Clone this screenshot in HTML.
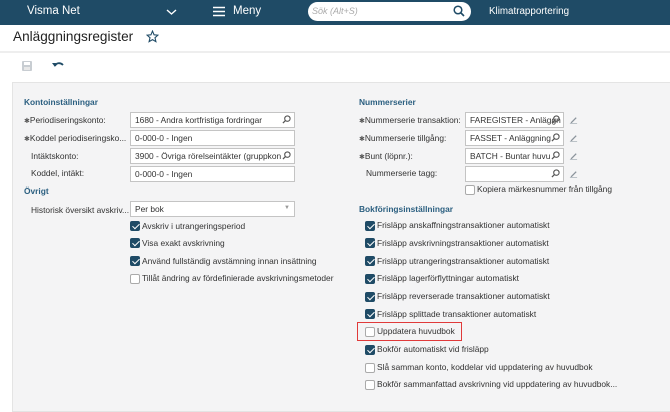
<!DOCTYPE html>
<html><head><meta charset="utf-8"><style>
*{margin:0;padding:0;box-sizing:border-box}
body{width:670px;height:403px;overflow:hidden;background:#fff;font-family:"Liberation Sans",Arial,sans-serif;font-size:8.4px;color:#333;position:relative}
.a{position:absolute;white-space:nowrap}
.hdr{position:absolute;left:0;top:0;width:670px;height:25px;background:#1f4b66}
.panel{position:absolute;left:12px;top:82px;width:660px;height:330px;background:#f4f4f5;border:1px solid #e4e4e4}
.sec{color:#2b5f80;font-weight:bold;font-size:8.4px}
.lbl{font-size:8.4px;color:#333}
.inp{position:absolute;height:16px;background:#fff;border:1px solid #c4c4c4;font-size:8.4px;padding:2px 4px;line-height:11px;white-space:nowrap;overflow:hidden}
.cb{position:absolute;width:10px;height:10px;border:1px solid #aaa;border-radius:2px;background:#fff}
.cb.on{background:#1f4b66;border-color:#1f4b66}
.cb.on::after{content:"";position:absolute;left:2.5px;top:0px;width:3px;height:6px;border:solid #fff;border-width:0 1.5px 1.5px 0;transform:rotate(45deg)}
.star{color:#555;font-size:7px}
</style></head><body>
<svg width="0" height="0" style="position:absolute"><defs>
<symbol id="mg" viewBox="0 0 10 10"><circle cx="6" cy="4" r="3" stroke="#555" stroke-width="1.2" fill="none"/><path d="M4 6L1 9" stroke="#555" stroke-width="1.4"/></symbol>
<symbol id="pn" viewBox="0 0 10 10"><path d="M2 8L7.5 2.5l1 1L3 9H2z" fill="#8a939b"/><path d="M1 9.5h8" stroke="#b5bcc2" stroke-width="1"/></symbol>
</defs></svg>
<div class="hdr"></div>
<div class="a" style="left:27px;top:5px;color:#fff;font-size:11.5px">Visma Net</div>
<svg class="a" style="left:166px;top:8px" width="11" height="8"><path d="M1 2l4.5 4L10 2" stroke="#fff" stroke-width="1.4" fill="none"/></svg>
<svg class="a" style="left:213px;top:6px" width="12" height="11"><path d="M0 1.5h12M0 5.5h12M0 9.5h12" stroke="#fff" stroke-width="1.4"/></svg>
<div class="a" style="left:233px;top:5px;color:#fff;font-size:11.5px">Meny</div>
<div class="a" style="left:308px;top:2px;width:163px;height:19px;background:#fff;border-radius:10px"></div>
<div class="a" style="left:312px;top:6px;color:#aaa;font-size:9px;font-style:italic">Sök (Alt+S)</div>
<svg class="a" style="left:453px;top:5px" width="12" height="12"><circle cx="5" cy="5" r="3.8" stroke="#1f4b66" stroke-width="1.5" fill="none"/><path d="M8 8l3 3" stroke="#1f4b66" stroke-width="1.6"/></svg>
<div class="a" style="left:489px;top:6px;color:#fff;font-size:9.8px">Klimatrapportering</div>

<div class="a" style="left:13px;top:29px;font-size:13.6px;color:#222">Anläggningsregister</div>
<svg class="a" style="left:146px;top:30px" width="13" height="13" viewBox="0 0 24 24"><path d="M12 2l2.9 6.9 7.1.6-5.4 4.7 1.7 7.3L12 17.8 5.7 21.5l1.7-7.3L2 9.5l7.1-.6z" fill="none" stroke="#1f4b66" stroke-width="2"/></svg>
<div class="a" style="left:0;top:51px;width:670px;height:2px;background:#eee"></div>
<svg class="a" style="left:22px;top:61px" width="10" height="10"><rect x="0" y="0" width="10" height="10" rx="1" fill="#c8cdd2"/><rect x="2" y="1" width="6" height="3" fill="#fff"/><rect x="2" y="6" width="6" height="3" fill="#e8e8e8"/></svg>
<svg class="a" style="left:52px;top:60px" width="12" height="9"><path d="M3 6C4 3 8 2 11 5" stroke="#1f4b66" stroke-width="1.8" fill="none"/><path d="M0 3l4 0-1 4z" fill="#1f4b66"/></svg>

<div class="panel"></div>
<div class="a sec" style="left:24px;top:97px">Kontoinställningar</div>
<div class="a lbl" style="left:24px;top:115px"><span class="star">✱</span>Periodiseringskonto:</div>
<div class="a lbl" style="left:24px;top:133px"><span class="star">✱</span>Koddel periodiseringsko...</div>
<div class="a lbl" style="left:31px;top:151px">Intäktskonto:</div>
<div class="a lbl" style="left:31px;top:168px">Koddel, intäkt:</div>
<div class="inp" style="left:130px;top:112px;width:165px">1680 - Andra kortfristiga fordringar</div>
<div class="inp" style="left:130px;top:130px;width:165px">0-000-0 - Ingen</div>
<div class="inp" style="left:130px;top:148px;width:165px;padding-right:16px">3900 - Övriga rörelseintäkter (gruppkon</div>
<div class="inp" style="left:130px;top:166px;width:165px">0-000-0 - Ingen</div>
<svg class="a" style="left:282px;top:115px" width="9" height="9"><use href="#mg"/></svg>
<svg class="a" style="left:282px;top:151px" width="9" height="9"><use href="#mg"/></svg>
<div class="a sec" style="left:24px;top:186px">Övrigt</div>
<div class="a lbl" style="left:31px;top:205px">Historisk översikt avskriv...</div>
<div class="inp" style="left:130px;top:201px;width:165px;height:16px">Per bok</div>
<div class="a" style="left:284px;top:205px;font-size:6px;color:#999">▼</div>

<div class="cb on" style="left:130px;top:221px"></div><div class="a lbl" style="left:142px;top:221px">Avskriv i utrangeringsperiod</div>
<div class="cb on" style="left:130px;top:238px"></div><div class="a lbl" style="left:142px;top:238px">Visa exakt avskrivning</div>
<div class="cb on" style="left:130px;top:256px"></div><div class="a lbl" style="left:142px;top:256px">Använd fullständig avstämning innan insättning</div>
<div class="cb" style="left:130px;top:274px"></div><div class="a lbl" style="left:142px;top:273px">Tillåt ändring av fördefinierade avskrivningsmetoder</div>

<div class="a sec" style="left:359px;top:97px">Nummerserier</div>
<div class="a lbl" style="left:359px;top:115px"><span class="star">✱</span>Nummerserie transaktion:</div>
<div class="a lbl" style="left:359px;top:133px"><span class="star">✱</span>Nummerserie tillgång:</div>
<div class="a lbl" style="left:359px;top:151px"><span class="star">✱</span>Bunt (löpnr.):</div>
<div class="a lbl" style="left:366px;top:168px">Nummerserie tagg:</div>
<div class="inp" style="left:465px;top:112px;width:99px;padding-right:16px">FAREGISTER - Anläggn</div>
<div class="inp" style="left:465px;top:130px;width:99px;padding-right:16px">FASSET - Anläggning</div>
<div class="inp" style="left:465px;top:148px;width:99px;padding-right:16px">BATCH - Buntar huvu</div>
<div class="inp" style="left:465px;top:166px;width:99px"></div>
<svg class="a" style="left:551px;top:115px" width="9" height="9"><use href="#mg"/></svg>
<svg class="a" style="left:551px;top:133px" width="9" height="9"><use href="#mg"/></svg>
<svg class="a" style="left:551px;top:151px" width="9" height="9"><use href="#mg"/></svg>
<svg class="a" style="left:551px;top:169px" width="9" height="9"><use href="#mg"/></svg>
<svg class="a" style="left:569px;top:115px" width="9" height="9"><use href="#pn"/></svg>
<svg class="a" style="left:569px;top:133px" width="9" height="9"><use href="#pn"/></svg>
<svg class="a" style="left:569px;top:151px" width="9" height="9"><use href="#pn"/></svg>
<svg class="a" style="left:569px;top:169px" width="9" height="9"><use href="#pn"/></svg>
<div class="cb" style="left:465px;top:185px"></div><div class="a lbl" style="left:477px;top:184px">Kopiera märkesnummer från tillgång</div>

<div class="a sec" style="left:359px;top:204px">Bokföringsinställningar</div>
<div class="cb on" style="left:365px;top:221px"></div><div class="a lbl" style="left:377px;top:220px">Frisläpp anskaffningstransaktioner automatiskt</div>
<div class="cb on" style="left:365px;top:238px"></div><div class="a lbl" style="left:377px;top:238px">Frisläpp avskrivningstransaktioner automatiskt</div>
<div class="cb on" style="left:365px;top:256px"></div><div class="a lbl" style="left:377px;top:256px">Frisläpp utrangeringstransaktioner automatiskt</div>
<div class="cb on" style="left:365px;top:274px"></div><div class="a lbl" style="left:377px;top:273px">Frisläpp lagerförflyttningar automatiskt</div>
<div class="cb on" style="left:365px;top:292px"></div><div class="a lbl" style="left:377px;top:291px">Frisläpp reverserade transaktioner automatiskt</div>
<div class="cb on" style="left:365px;top:309px"></div><div class="a lbl" style="left:377px;top:309px">Frisläpp splittade transaktioner automatiskt</div>
<div class="a" style="left:357px;top:322px;width:105px;height:19px;border:1.5px solid #e03a3a"></div>
<div class="cb" style="left:365px;top:327px"></div><div class="a lbl" style="left:377px;top:326px">Uppdatera huvudbok</div>
<div class="cb on" style="left:365px;top:345px"></div><div class="a lbl" style="left:377px;top:344px">Bokför automatiskt vid frisläpp</div>
<div class="cb" style="left:365px;top:363px"></div><div class="a lbl" style="left:377px;top:362px">Slå samman konto, koddelar vid uppdatering av huvudbok</div>
<div class="cb" style="left:365px;top:380px"></div><div class="a lbl" style="left:377px;top:379px">Bokför sammanfattad avskrivning vid uppdatering av huvudbok...</div>
</body></html>
